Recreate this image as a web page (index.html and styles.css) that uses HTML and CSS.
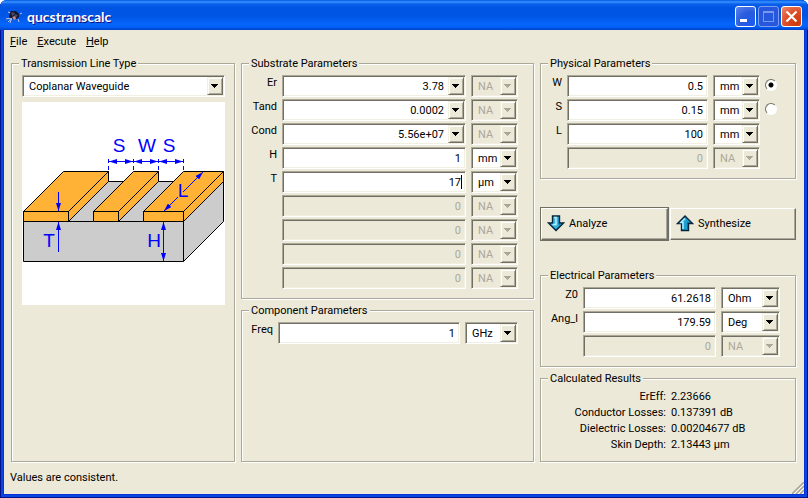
FILE: index.html
```html
<!DOCTYPE html>
<html lang="en">
<head>
<meta charset="utf-8">
<title>qucstranscalc</title>
<link rel="stylesheet" href="styles.css">
</head>
<body>
<div class="window">
  <header class="titlebar">
    <svg class="app-icon" viewBox="0 0 16 16" aria-hidden="true">
      <path d="M2 3l3 1M14 5l2-1M2 13l2-2 2-1M0 10l4-1M12 10l1 3M4 14l1-3" fill="none" stroke="#b9c4ee" stroke-width="1"/>
      <path d="M5 2h5l3 3v3l-2 2-3-1-3 2-2-3 1-4z" fill="#14142c"/>
      <path d="M5 4l2-1 2 1-1 2-2 1zM9 5l3 1-2 3-2-1z" fill="#4a4560"/>
      <path d="M6 8l3-1 1 3-2 1z" fill="#b58e92"/>
      <path d="M3 9h3v2H4z" fill="#9db0ea"/>
    </svg>
    <h1 class="title">qucstranscalc</h1>
    <div class="caption-buttons">
      <button class="cap" type="button" aria-label="Minimize"><svg viewBox="0 0 21 21"><path d="M5 13h7v3H5z" fill="#fff"/></svg></button>
      <button class="cap cap-off" type="button" aria-label="Maximize" disabled><svg viewBox="0 0 21 21"><path d="M5 5h11v11H5zM6 7v8h9V7z" fill="#7c97ee" fill-rule="evenodd"/></svg></button>
      <button class="cap cap-close" type="button" aria-label="Close"><svg viewBox="0 0 21 21"><path d="M5.500 5.500l10 10M15.500 5.500l-10 10" stroke="#fff" stroke-width="2.200"/></svg></button>
    </div>
  </header>

  <div class="client">
    <nav class="menubar">
      <a href="#file"><u>F</u>ile</a>
      <a href="#execute"><u>E</u>xecute</a>
      <a href="#help"><u>H</u>elp</a>
    </nav>

    <main class="columns">
      <div class="column">
        <fieldset class="group grow line-type">
          <legend>Transmission Line Type</legend>
          <span class="combo"><select aria-label="Transmission line type"><option>Coplanar Waveguide</option></select></span>
          <svg class="diagram" viewBox="0 0 203 203" role="img" aria-label="Coplanar waveguide cross-section">
            <defs>
              <marker id="tip" viewBox="0 0 8 5" refX="8" refY="2.500" markerWidth="8" markerHeight="5" orient="auto-start-reverse" markerUnits="userSpaceOnUse"><path d="M0 0l8 2.500-8 2.500z" fill="#00f"/></marker>
            </defs>
            <rect width="203" height="203" fill="#fff"/>
            <g stroke="#000" stroke-linejoin="round">
              <path d="M1.500 119.500L41.500 79.500H201.500V119.500L161.500 159.500H1.500z" fill="#ccc"/>
              <path d="M86.500 69.500h25v9.500h-25zM136.500 69.500h25v9.500h-25z" fill="#fff" stroke="none"/>
              <path d="M86.500 79.500h16M136.500 79.500h16M161.500 119.500V159.500" fill="none"/>
              <g fill="#ffb235">
                <path d="M1.500 109.500L41.500 69.500H86.500L46.500 109.500zM1.500 109.500h45v10h-45zM46.500 109.500L86.500 69.500v10L46.500 119.500z"/>
                <path d="M71.500 109.500L111.500 69.500H136.500L96.500 109.500zM71.500 109.500h25v10h-25zM96.500 109.500L136.500 69.500v10L96.500 119.500z"/>
                <path d="M121.500 109.500L161.500 69.500H201.500L161.500 109.500zM121.500 109.500h40v10h-40zM161.500 109.500L201.500 69.500v10L161.500 119.500z"/>
              </g>
              <path d="M46.500 119.500h25M96.500 119.500h25" fill="none"/>
            </g>
            <g stroke="#00f" fill="none">
              <path d="M86.500 57v12M111.500 57v12M136.500 57v12M161.500 57v12" stroke-dasharray="4 3"/>
              <g marker-end="url(#tip)">
                <path d="M87 59.500h24" marker-start="url(#tip)"/>
                <path d="M112 59.500h24" marker-start="url(#tip)"/>
                <path d="M137 59.500h24" marker-start="url(#tip)"/>
                <path d="M141.500 120v39" marker-start="url(#tip)"/>
                <path d="M36.500 90v19"/>
                <path d="M36.500 150v-30"/>
                <path d="M156 95l-14 14"/>
                <path d="M161 90l20-20"/>
              </g>
            </g>
            <g class="dimension" text-anchor="middle">
              <text x="97" y="50">S</text><text x="125" y="50">W</text><text x="147" y="50">S</text>
              <text x="161" y="95">L</text><text x="27" y="145">T</text><text x="132" y="145">H</text>
            </g>
          </svg>
        </fieldset>
      </div>

      <div class="column">
        <fieldset class="group params substrate">
          <legend>Substrate Parameters</legend>
          <label for="er">Er</label><span class="combo edit"><input id="er" value="3.78"></span><span class="combo"><select aria-label="Er unit" disabled><option>NA</option></select></span>
          <label for="tand">Tand</label><span class="combo edit"><input id="tand" value="0.0002"></span><span class="combo"><select aria-label="Tand unit" disabled><option>NA</option></select></span>
          <label for="cond">Cond</label><span class="combo edit"><input id="cond" value="5.56e+07"></span><span class="combo"><select aria-label="Cond unit" disabled><option>NA</option></select></span>
          <label for="h">H</label><input id="h" value="1"><span class="combo"><select aria-label="H unit"><option>mm</option></select></span>
          <label for="t">T</label><span class="caret"><input id="t" value="17"></span><span class="combo"><select aria-label="T unit"><option>µm</option></select></span>
          <label for="s6"></label><input id="s6" value="0" disabled><span class="combo"><select aria-label="Unit" disabled><option>NA</option></select></span>
          <label for="s7"></label><input id="s7" value="0" disabled><span class="combo"><select aria-label="Unit" disabled><option>NA</option></select></span>
          <label for="s8"></label><input id="s8" value="0" disabled><span class="combo"><select aria-label="Unit" disabled><option>NA</option></select></span>
          <label for="s9"></label><input id="s9" value="0" disabled><span class="combo"><select aria-label="Unit" disabled><option>NA</option></select></span>
        </fieldset>
        <fieldset class="group params component grow">
          <legend>Component Parameters</legend>
          <label for="freq">Freq</label><input id="freq" value="1"><span class="combo"><select aria-label="Freq unit"><option>GHz</option></select></span>
        </fieldset>
      </div>

      <div class="column">
        <fieldset class="group params physical">
          <legend>Physical Parameters</legend>
          <label for="w">W</label><input id="w" value="0.5"><span class="combo"><select aria-label="W unit"><option>mm</option></select></span><input type="radio" name="solve" aria-label="Solve for W" checked>
          <label for="s">S</label><input id="s" value="0.15"><span class="combo"><select aria-label="S unit"><option>mm</option></select></span><input type="radio" name="solve" aria-label="Solve for S">
          <label for="l">L</label><input id="l" value="100"><span class="combo"><select aria-label="L unit"><option>mm</option></select></span><span></span>
          <label for="p4"></label><input id="p4" value="0" disabled><span class="combo"><select aria-label="Unit" disabled><option>NA</option></select></span><span></span>
        </fieldset>

        <div class="actions">
          <button class="push default" type="button">
            <svg class="arrow" viewBox="0 0 18 17" aria-hidden="true"><path d="M5.500 1h7v7h4L9 15.500 1.500 8h4z" fill="#35b5e0" stroke="#06253c" stroke-width="1.400"/><path d="M7 2.500h2v7H5.500" fill="none" stroke="#b8ecfa" stroke-width="1.500"/><path d="M11.500 3v6.500h2L9 14" fill="none" stroke="#1483b4"/></svg>
            Analyze
          </button>
          <button class="push" type="button">
            <svg class="arrow" viewBox="0 0 18 17" aria-hidden="true"><path d="M5.500 15.500h7v-7h4L9 1 1.500 8.500h4z" fill="#1f9fd0" stroke="#06253c" stroke-width="1.400"/><path d="M7 14V7.500H5L9 3.500" fill="none" stroke="#b8ecfa" stroke-width="1.500"/><path d="M11.500 14V7.500h2" fill="none" stroke="#0d6c9b"/></svg>
            Synthesize
          </button>
        </div>

        <fieldset class="group params electrical">
          <legend>Electrical Parameters</legend>
          <label for="z0">Z0</label><input id="z0" value="61.2618"><span class="combo"><select aria-label="Z0 unit"><option>Ohm</option></select></span>
          <label for="ang">Ang_l</label><input id="ang" value="179.59"><span class="combo"><select aria-label="Ang_l unit"><option>Deg</option></select></span>
          <label for="e3"></label><input id="e3" value="0" disabled><span class="combo"><select aria-label="Unit" disabled><option>NA</option></select></span>
        </fieldset>

        <fieldset class="group calculated">
          <legend>Calculated Results</legend>
          <dl class="results">
            <dt>ErEff:</dt><dd>2.23666</dd>
            <dt>Conductor Losses:</dt><dd>0.137391 dB</dd>
            <dt>Dielectric Losses:</dt><dd>0.00204677 dB</dd>
            <dt>Skin Depth:</dt><dd>2.13443 µm</dd>
          </dl>
        </fieldset>
      </div>
    </main>

    <footer class="statusbar">
      <span>Values are consistent.</span>
      <svg class="grip" viewBox="0 0 12 12" aria-hidden="true"><path d="M0 12L12 0M4 12l8-8M8 12l4-4" stroke="#aca899" stroke-width="1.600"/><path d="M2 12L12 2M6 12l6-6M10 12l2-2" stroke="#fff"/></svg>
    </footer>
  </div>
</div>
</body>
</html>
```
FILE: styles.css
```css
:root {
  --face: #ece9d8;
  --shade: #aca899;
  --dark: #716f64;
  --light: #f1efe2;
}

*,
*::after { box-sizing: border-box; }

body {
  margin: 0;
  background: #fff;
  color: #000;
  font: 11px/15px Roboto, "Liberation Sans", sans-serif;
}

.window {
  display: flex;
  flex-direction: column;
  min-height: 100vh;
  padding: 0 4px 4px;
  background: #0831d9;
  border-radius: 7px 7px 0 0;
  box-shadow: inset 1px -1px #00138c, inset -1px 0 #00138c, inset 3px -3px #0a45e0, inset -3px 0 #0a45e0;
  overflow: hidden;
}

.titlebar {
  display: flex;
  align-items: center;
  height: 30px;
  margin: 0 -4px;
  padding: 3px 6px 0 6px;
  background: linear-gradient(#0058e6 0, #3b92ff 2px, #0a5fec 4px, #0054e3 8px, #0055e5 16px, #0566fb 24px, #0260f5 27px, #003fc8 30px);
}

.app-icon { width: 16px; height: 16px; }

.title {
  flex: 1;
  margin: 0 0 0 5px;
  color: #fff;
  font: bold 14px/16px Lato, sans-serif;
  text-shadow: 1px 1px #0f1089;
}

.caption-buttons { display: flex; gap: 2px; }

.cap {
  width: 21px;
  height: 21px;
  padding: 0;
  border: 1px solid #fff;
  border-radius: 3px;
  background: radial-gradient(circle at 80% 85%, #1c5cf0, #2a5cdc 50%, #5c87f0);
}

.cap svg { display: block; width: 21px; height: 21px; margin: -1px; }
.cap-off { border-color: #7f9df0; background: #2558dc; }
.cap-close { background: radial-gradient(circle at 80% 85%, #cc3a0c, #dd4a24 50%, #ee8a70); }

.client {
  display: flex;
  flex: 1;
  flex-direction: column;
  background: var(--face);
}

.menubar {
  display: flex;
  gap: 10px;
  height: 26px;
  padding: 4px 6px;
}

.menubar a { color: inherit; text-decoration: none; }

.columns {
  display: grid;
  flex: 1;
  grid-template-columns: 224fr 293fr 256fr;
  gap: 6px;
  padding: 0 8px 0 7px;
}

.column {
  display: flex;
  flex-direction: column;
  gap: 4px;
  min-width: 0;
}

.group {
  min-width: 0;
  margin: 0;
  padding: 4px 15px 9px 10px;
  border: 1px solid var(--shade);
  box-shadow: 1px 1px #fff, inset 1px 1px #fff;
}

.group legend {
  margin-left: -3px;
  padding: 0 2px;
  background: var(--face);
}

.grow { flex: 1; }

.line-type { padding-right: 9px; }

.diagram {
  display: block;
  width: 100%;
  margin-top: 5px;
}

.dimension {
  fill: #00f;
  font: 19px "Liberation Sans", sans-serif;
}

.params {
  display: grid;
  align-content: start;
  gap: 2px 5px;
}

.substrate { grid-template-columns: 25px 1fr 47px; }
.component { grid-template-columns: 21px 1fr 53px; }
.physical { grid-template-columns: 11px 1fr 47px 15px; }
.electrical { grid-template-columns: 27px 1fr 59px; }

.params label {
  display: flex;
  justify-content: flex-end;
  white-space: nowrap;
}

input:not([type="radio"]),
select {
  appearance: none;
  display: block;
  width: 100%;
  min-width: 0;
  height: 22px;
  margin: 0;
  padding: 0 4px;
  border: 1px solid;
  border-color: var(--shade) #fff #fff var(--shade);
  border-radius: 0;
  outline: 0;
  background: #fff;
  box-shadow: inset 1px 1px var(--dark), inset -1px -1px var(--light);
  color: #000;
  font: inherit;
  text-align: right;
}

select {
  padding: 0 18px 0 6px;
  text-align: left;
}

input:not([type="radio"]):disabled,
select:disabled {
  background: var(--face);
  color: var(--shade);
  opacity: 1;
}

.combo { position: relative; display: block; }
.combo.edit input { padding-right: 21px; }

.combo::after {
  content: "";
  position: absolute;
  top: 2px;
  right: 2px;
  bottom: 2px;
  width: 16px;
  border: 1px solid;
  border-color: var(--light) var(--dark) var(--dark) var(--light);
  box-shadow: inset 1px 1px #fff, inset -1px -1px var(--shade);
  --ink: linear-gradient(#000, #000);
  background:
    var(--ink) 3px 6px / 7px 1px no-repeat,
    var(--ink) 4px 7px / 5px 1px no-repeat,
    var(--ink) 5px 8px / 3px 1px no-repeat,
    var(--ink) 6px 9px / 1px 1px no-repeat,
    var(--face);
  pointer-events: none;
}

.combo:has(:disabled)::after { --ink: linear-gradient(var(--shade), var(--shade)); }

.caret { position: relative; display: block; }

.caret::after {
  content: "";
  position: absolute;
  top: 4px;
  right: 4px;
  width: 1px;
  height: 14px;
  background: #000;
}

input[type="radio"] {
  appearance: none;
  width: 12px;
  height: 12px;
  margin: 4px 0 0;
  border: 1px solid;
  border-color: var(--dark) #fff #fff var(--dark);
  border-radius: 50%;
  background: #fff;
}

input[type="radio"]:checked { background: radial-gradient(circle, #000 2px, #fff 3px); }

.actions {
  display: grid;
  flex: 1;
  grid-template-columns: 1fr 1fr;
  align-items: center;
}

.push {
  display: flex;
  align-items: center;
  gap: 4px;
  height: 32px;
  margin-left: 1px;
  padding: 0 5px;
  border: 1px solid;
  border-color: #fff var(--dark) var(--dark) #fff;
  border-radius: 0;
  background: var(--face);
  box-shadow: inset -1px -1px var(--shade);
  color: #000;
  font: inherit;
}

.push.default { outline: 1px solid var(--dark); }

.push + .push { margin-left: 2px; }

.arrow { width: 18px; height: 17px; }

.calculated { padding: 3px 15px 8px 10px; }

.results {
  display: grid;
  grid-template-columns: 115px 1fr;
  gap: 0 5px;
  margin: 0;
  line-height: 16px;
}

.results dt { text-align: right; }
.results dd { margin: 0; }

.statusbar {
  display: flex;
  justify-content: space-between;
  height: 32px;
  padding: 8px 0 0 6px;
}

.grip { align-self: flex-end; width: 12px; height: 12px; }
```
